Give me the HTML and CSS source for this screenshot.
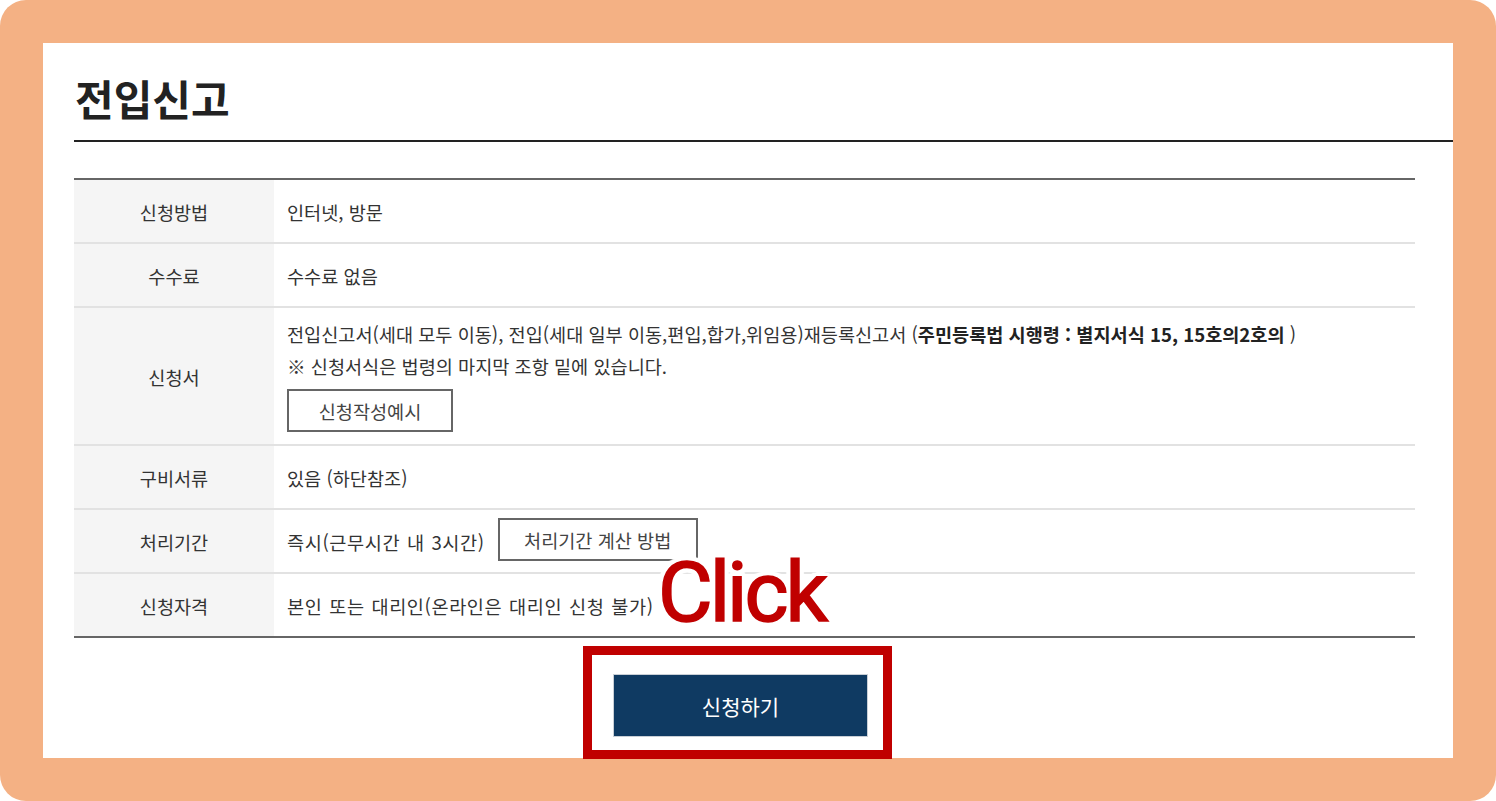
FILE: index.html
```html
<!DOCTYPE html>
<html lang="ko">
<head>
    <meta charset="UTF-8">
    <meta name="viewport" content="width=device-width, initial-scale=1.0">
    <title>전입신고</title>
    <link rel="stylesheet" href="styles.css">
</head>
<body>
    <div class="frame">
        <div class="page">
            <h1 class="page-title">전입신고</h1>

            <div class="info">
                <div class="info-row">
                    <div class="info-label">신청방법</div>
                    <div class="info-value">인터넷, 방문</div>
                </div>
                <div class="info-row">
                    <div class="info-label">수수료</div>
                    <div class="info-value">수수료 없음</div>
                </div>
                <div class="info-row">
                    <div class="info-label">신청서</div>
                    <div class="info-value info-value--block">
                        <p>전입신고서(세대 모두 이동), 전입(세대 일부 이동,편입,합가,위임용)재등록신고서 (<strong>주민등록법 시행령 : 별지서식 15, 15호의2호의</strong> )</p>
                        <p>※ 신청서식은 법령의 마지막 조항 밑에 있습니다.</p>
                        <button type="button" class="btn-line btn-example">신청작성예시</button>
                    </div>
                </div>
                <div class="info-row">
                    <div class="info-label">구비서류</div>
                    <div class="info-value">있음 (하단참조)</div>
                </div>
                <div class="info-row">
                    <div class="info-label">처리기간</div>
                    <div class="info-value">
                        <span class="wide-text">즉시(근무시간 내 3시간)</span>
                        <button type="button" class="btn-line btn-period">처리기간 계산 방법</button>
                    </div>
                </div>
                <div class="info-row">
                    <div class="info-label">신청자격</div>
                    <div class="info-value wide-text">본인 또는 대리인(온라인은 대리인 신청 불가)</div>
                </div>
            </div>

            <div class="actions">
                <button type="button" class="btn-apply">신청하기</button>
            </div>

            <!-- 안내용 표시 -->
            <div class="mark-box"></div>
            <div class="mark-click">Click</div>
        </div>
    </div>
</body>
</html>
```

FILE: styles.css
```css
body {
    margin: 0;
    padding: 0;
    background-color: #ffffff;
    font-family: "Noto Sans CJK KR", "Noto Sans", sans-serif;
}
.frame {
    width: 1496px;
    height: 801px;
    box-sizing: border-box;
    padding: 43px;
    background-color: #f4b184;
    border-radius: 26px;
}
.page {
    position: relative;
    height: 100%;
    box-sizing: border-box;
    padding-left: 31px;
    background: #ffffff;
}
.page-title {
    margin: 0;
    padding: 30px 0 17px 1px;
    font-size: 42px;
    line-height: 50px;
    font-weight: bold;
    color: #222;
    border-bottom: 2px solid #222;
}
.info {
    width: 1341px;
    margin-top: 36px;
    border-top: 2px solid #666;
    border-bottom: 2px solid #666;
    font-size: 18.6px;
    color: #333;
}
.info-row {
    display: flex;
    min-height: 62px;
    border-bottom: 2px solid #e2e2e2;
}
.info-row:last-child {
    border-bottom: none;
}
.info-label {
    width: 200px;
    flex-shrink: 0;
    display: flex;
    align-items: center;
    justify-content: center;
    background-color: #f5f5f5;
}
.info-value {
    display: flex;
    align-items: center;
    gap: 13px;
    padding: 0 13px;
}
.info-value--block {
    display: block;
    padding: 10px 13px 12px;
}
.wide-text {
    letter-spacing: 0.6px;
    word-spacing: 1px;
}
.info-value p {
    margin: 0;
    line-height: 32px;
}
.info-value strong {
    color: #222;
}
.btn-line {
    height: 43px;
    padding: 0 18px;
    border: 2px solid #666;
    background: #fff;
    color: #444;
    font-family: inherit;
    font-size: 18.6px;
    cursor: pointer;
}
.btn-example {
    display: block;
    width: 166px;
    margin-top: 7px;
}
.btn-period {
    width: 200px;
    margin-top: -4px;
}
.actions {
    width: 1341px;
    display: flex;
    justify-content: center;
    padding-right: 8px;
    box-sizing: border-box;
    margin-top: 36px;
}
.btn-apply {
    width: 255px;
    height: 63px;
    background-color: #0f3a62;
    border: 1px solid #c9cfd6;
    color: #fff;
    font-family: inherit;
    font-size: 21px;
    cursor: pointer;
}
.mark-box {
    position: absolute;
    left: 540px;
    top: 603px;
    width: 309px;
    height: 113px;
    box-sizing: border-box;
    border: 9px solid #c00000;
}
.mark-click {
    position: absolute;
    left: 615px;
    top: 500px;
    font-family: Roboto, "Liberation Sans", sans-serif;
    font-size: 84px;
    font-weight: 400;
    line-height: 100px;
    letter-spacing: -3px;
    color: #c00000;
    -webkit-text-stroke: 1.6px #c00000;
    text-shadow: 0 0 5px #fff, 5px 0 1px #fff, -5px 0 1px #fff, 0 5px 1px #fff, 0 -5px 1px #fff,
        4px 4px 1px #fff, -4px 4px 1px #fff, 4px -4px 1px #fff, -4px -4px 1px #fff;
}
```
